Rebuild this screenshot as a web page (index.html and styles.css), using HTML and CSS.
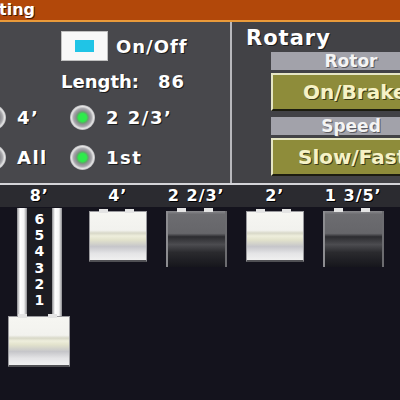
FILE: index.html
```html
<!DOCTYPE html>
<html lang="en">
<head>
  <meta charset="UTF-8">
  <title>Drawbar Setting</title>
  <link rel="stylesheet" href="styles.css">
</head>
<body>

  <div class="titlebar"><span>ting</span></div>

  <div class="panel">

    <!-- Left: percussion options -->
    <div class="pane-left">
      <div class="check-row">
        <span class="check"><span class="check-mark"></span></span>
        <span class="txt">On/Off</span>
      </div>
      <div class="length-row">
        <span class="txt">Length:</span>
        <span class="txt value">86</span>
      </div>
      <div class="radio-row">
        <div class="radio-item first"><span class="radio"></span><span class="txt">4’</span></div>
        <div class="radio-item"><span class="radio on"></span><span class="txt">2 2/3’</span></div>
      </div>
      <div class="radio-row">
        <div class="radio-item first"><span class="radio"></span><span class="txt">All</span></div>
        <div class="radio-item"><span class="radio on"></span><span class="txt">1st</span></div>
      </div>
    </div>

    <!-- Right: rotary -->
    <div class="pane-right">
      <div class="pane-title">Rotary</div>
      <div class="group-head">Rotor</div>
      <div class="olive-btn">On/Brake</div>
      <div class="group-head">Speed</div>
      <div class="olive-btn">Slow/Fast</div>
    </div>

  </div>

  <div class="labels">
    <span>8’</span>
    <span>4’</span>
    <span>2 2/3’</span>
    <span>2’</span>
    <span>1 3/5’</span>
  </div>

  <div class="bars">
    <div class="bar">
      <div class="shaft">
        <span class="rail"></span>
        <div class="scale">
          <span>6</span><span>5</span><span>4</span><span>3</span><span>2</span><span>1</span>
        </div>
        <span class="rail"></span>
      </div>
      <div class="knob white"></div>
    </div>
    <div class="bar"><div class="knob white"></div></div>
    <div class="bar"><div class="knob dark"></div></div>
    <div class="bar"><div class="knob white"></div></div>
    <div class="bar"><div class="knob dark"></div></div>
  </div>

</body>
</html>
```

FILE: styles.css
```css
* {
  margin: 0;
  padding: 0;
  box-sizing: border-box;
}

body {
  width: 400px;
  height: 400px;
  overflow: hidden;
  background-color: #14131d;
  font-family: 'DejaVu Sans', sans-serif;
  font-weight: bold;
  color: #fff;
}

.txt {
  text-shadow: 1px 1px 0 #1c1c1c;
}

/* Title bar */
.titlebar {
  height: 22px;
  background-color: #b2480a;
  border-bottom: 2px solid #e99a3a;
  font-size: 16px;
  line-height: 20px;
  margin-left: -1px;
  text-shadow: 1px 1px 0 #4a1800;
  overflow: hidden;
}

/* Upper panel */
.panel {
  display: flex;
  height: 163px;
  background-color: #48484c;
  border-bottom: 2px solid #d4d4d8;
}

.pane-left {
  width: 232px;
  padding-top: 9px;
  font-size: 18px;
  border-right: 2px solid #b8b8bc;
}

.check-row {
  display: flex;
  align-items: center;
  gap: 8px;
  margin-left: 61px;
  height: 30px;
  letter-spacing: 1px;
}

.check {
  display: flex;
  align-items: center;
  justify-content: center;
  width: 47px;
  height: 30px;
  background-color: #f8f8f8;
  border: 1px solid #c0c0c0;
}

.check-mark {
  width: 19px;
  height: 12px;
  background-color: #20c4e6;
}

.length-row {
  display: flex;
  align-items: center;
  margin: 11px 0 0 61px;
  height: 18px;
}

.length-row .value {
  margin-left: 19px;
  letter-spacing: 1px;
}

.radio-row {
  display: flex;
  align-items: center;
  margin: 15px 0 0 -19px;
  height: 25px;
}

.radio-item {
  display: flex;
  align-items: center;
}

.radio-item.first {
  width: 89px;
}

.radio-item .txt {
  margin-left: 11px;
  letter-spacing: 1.5px;
}

.radio {
  width: 25px;
  height: 25px;
  border-radius: 50%;
  background: radial-gradient(circle, #909094 0 7px, #a8a8ac 9px, #e6e6e6 11px, #b4b4b8 12.5px);
}

.radio.on {
  background: radial-gradient(circle, #2eea4c 0 4px, #5fa868 5.5px, #909094 7px, #a8a8ac 9px, #e6e6e6 11px, #b4b4b8 12.5px);
}

.pane-right {
  flex: 1;
  overflow: hidden;
  background-color: #424246;
  padding-top: 5px;
}

.pane-title {
  font-size: 21px;
  line-height: 22px;
  letter-spacing: 1px;
  margin: 0 0 3px 14px;
  text-shadow: 1px 1px 0 #1c1c1c;
}

.group-head {
  width: 160px;
  height: 18px;
  margin-left: 39px;
  background-color: #a2a2aa;
  color: #f4f4f4;
  font-size: 17px;
  line-height: 18px;
  text-align: center;
  text-shadow: 1px 1px 0 #5a5a60;
}

.olive-btn {
  width: 160px;
  height: 38px;
  margin: 3px 0 6px 39px;
  padding-left: 30px;
  background-color: #8e8c3a;
  border-top: 2px solid #e6e6c4;
  border-left: 2px solid #e6e6c4;
  border-bottom: 2px solid #1c1c10;
  color: #f6f2c6;
  font-size: 20px;
  line-height: 34px;
  white-space: nowrap;
  text-shadow: 1px 1px 0 #3a3a18;
}

.olive-btn:last-child {
  margin-bottom: 0;
  padding-left: 25px;
}

/* Footage labels */
.labels {
  display: grid;
  grid-template-columns: repeat(5, 78.5px);
  height: 22px;
  background-color: #2b2b30;
  font-size: 16px;
  line-height: 22px;
  letter-spacing: 1px;
  text-align: center;
  text-shadow: 1px 1px 0 #000;
}

/* Drawbars */
.bars {
  display: grid;
  grid-template-columns: repeat(5, 78.5px);
  padding-top: 4px;
}

.bar {
  display: flex;
  flex-direction: column;
  align-items: center;
}

.shaft {
  display: flex;
  height: 108px;
  margin-top: -3px;
}

.rail {
  width: 10px;
  background: linear-gradient(to right, #8a8a8e, #ffffff 30%, #f4f4f4 70%, #8a8a8e);
}

.scale {
  display: flex;
  flex-direction: column;
  width: 25px;
  padding-top: 3px;
  background-color: #1c1c22;
  font-size: 14px;
  line-height: 16.2px;
  text-align: center;
}

.knob {
  position: relative;
  width: 58px;
  height: 51px;
}

.knob::before,
.knob::after {
  content: '';
  position: absolute;
  top: -3px;
  width: 9px;
  height: 4px;
  background-color: #e4e4e4;
}

.knob::before {
  left: 9px;
}

.knob::after {
  right: 12px;
}

.knob.white {
  background: linear-gradient(#f6f6f2 0, #f2f2ee 38%, #d8d8c8 44%, #eeeedc 50%, #e2e2cc 58%, #c6c6ca 72%, #e4e4e6 86%, #f0f0f0 100%);
  border: 1px solid #9a9a9e;
  border-bottom: 2px solid #505054;
}

.bar:first-child .knob {
  width: 62px;
  height: 51px;
}

.knob.dark {
  width: 61px;
  height: 56px;
  background: linear-gradient(#8a8a8e 0, #6c6c70 6%, #66666a 40%, #2c2c30 46%, #4c4c50 60%, #2a2a2e 74%, #16161c 100%);
  border-left: 2px solid #8c8c90;
  border-right: 2px solid #6c6c70;
}
```
